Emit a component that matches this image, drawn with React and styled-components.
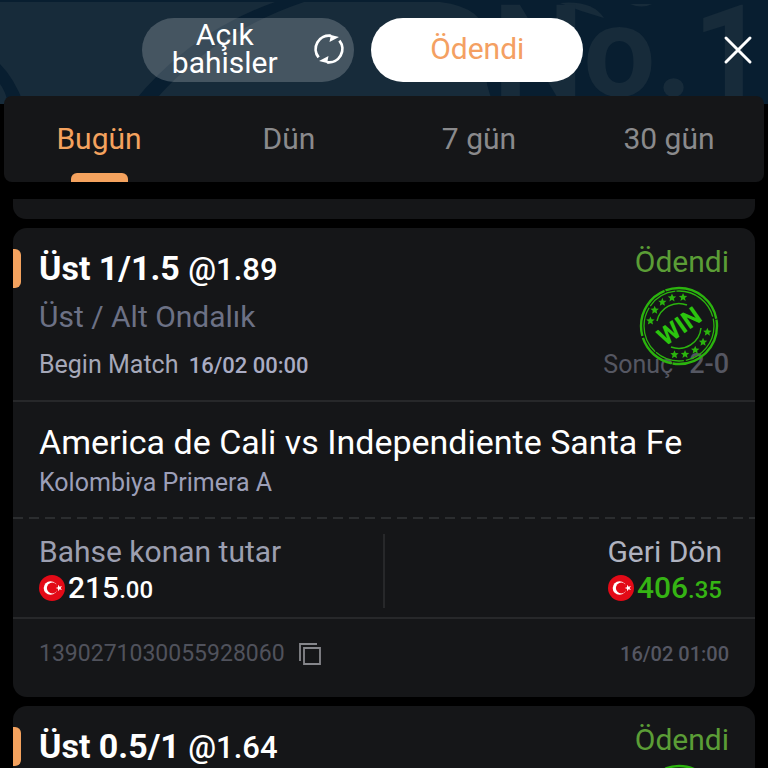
import React from "react";
import styled, { createGlobalStyle } from "styled-components";

const Global = createGlobalStyle`
  * { box-sizing: border-box; }
  html, body, #root { height: 100%; }
  body { margin: 0; background: #000; overflow: hidden; font-family: Roboto, sans-serif; }
  button { font: inherit; border: 0; padding: 0; background: none; color: inherit; cursor: pointer; }
  h2, h3, p, dl, dt, dd { margin: 0; font-weight: 400; }
`;

const Page = styled.div`
  height: 100%;
  display: flex;
  flex-direction: column;
  overflow: hidden;
`;

const Header = styled.header`
  position: relative;
  flex: none;
  height: 96px;
  padding: 4px 14px 0 0;
  display: grid;
  grid-template-columns: 5fr auto 6fr;
  align-items: center;
  background: #081e30;
`;

const Backdrop = styled.svg`
  position: absolute;
  top: 0;
  left: 0;
  width: 100%;
  height: 104px;
`;

const Switcher = styled.div`
  position: relative;
  grid-column: 2;
  display: flex;
  gap: 17px;
`;

const Pill = styled.button`
  width: 212px;
  height: 64px;
  border-radius: 32px;
  display: flex;
  align-items: center;
  justify-content: center;
  gap: 35px;
  padding: 0 0 2px ${(p) => (p.$active ? 0 : 20)}px;
  background: ${(p) => (p.$active ? "#fff" : "rgba(255, 255, 255, 0.2)")};
  color: ${(p) => (p.$active ? "#f4a062" : "#fff")};
  font-size: 30px;
  line-height: 28px;
`;

const CloseButton = styled.button`
  position: relative;
  justify-self: end;
  width: 32px;
  height: 32px;
  svg { display: block; }
`;

const Tabs = styled.nav`
  position: relative;
  flex: none;
  height: 86px;
  margin: 0 4px 17px;
  display: grid;
  grid-template-columns: repeat(4, 1fr);
  background: #151618;
  border-radius: 8px;
`;

const Tab = styled.button`
  display: flex;
  flex-direction: column;
  align-items: center;
  justify-content: space-between;
  padding-top: 25px;
  font-size: 30px;
  line-height: 36px;
  color: ${(p) => (p.$active ? "#f4a25e" : "#8a8a8c")};
  &::after {
    content: "";
    width: 57px;
    height: 9px;
    border-radius: 6px 6px 0 0;
    background: ${(p) => (p.$active ? "#f4a25e" : "transparent")};
  }
`;

const List = styled.main`
  flex: 1;
  min-height: 0;
  overflow: hidden;
  padding: 0 13px;
  display: flex;
  flex-direction: column;
  gap: 9px;
`;

const PreviousCard = styled.div`
  flex: none;
  height: 20px;
  border-radius: 0 0 13px 13px;
  background: #151618;
`;

const Card = styled.article`
  flex: none;
  border-radius: 14px;
  background: #151618;
`;

const Selection = styled.section`
  display: flex;
  justify-content: space-between;
  position: relative;
  padding: 20px 26px 17px;
  border-bottom: ${(p) => (p.$line ? "2px solid #27282a" : "0")};
  &::before {
    content: "";
    position: absolute;
    left: 0;
    top: 21px;
    width: 8px;
    height: 39px;
    border-radius: 0 6px 6px 0;
    background: #f4a25e;
  }
`;

const Fixture = styled.section`
  padding: 20px 26px 16px;
`;

const Pick = styled.h2`
  font-size: 34px;
  line-height: 40px;
  font-weight: 700;
  color: #fff;
`;

const Odds = styled.span`
  font-size: 31px;
  line-height: 1;
  font-weight: 500;
`;

const Market = styled.p`
  margin-top: 9px;
  font-size: 30px;
  line-height: 40px;
  color: #6c7185;
`;

const Begin = styled.p`
  margin-top: 10px;
  font-size: 25px;
  line-height: 36px;
  color: #a5a8b8;
`;

const Time = styled.time`
  margin-left: 4px;
  font-size: ${(p) => (p.$dim ? 20 : 22)}px;
  line-height: 1;
  font-weight: 500;
  color: ${(p) => (p.$dim ? "#555763" : "#a9acc4")};
`;

const Outcome = styled.div`
  position: relative;
  display: flex;
  flex-direction: column;
  justify-content: space-between;
  text-align: right;
`;

const Status = styled.p`
  font-size: 30px;
  line-height: 28px;
  color: #5b9d36;
`;

const Result = styled.p`
  display: flex;
  align-items: baseline;
  gap: 16px;
  justify-content: flex-end;
  font-size: 25px;
  line-height: 36px;
  color: #555762;
  strong { font-size: 27px; font-weight: 500; line-height: 34px; }
`;

const Stamp = styled.svg`
  position: absolute;
  right: 10px;
  top: 38px;
  width: 80px;
  height: 80px;
`;

const StampWord = styled.text`
  font: 700 25px Roboto, sans-serif;
  text-anchor: middle;
  fill: #2bc40e;
`;

const BackdropWord = styled.text`
  font: 700 128px Roboto, sans-serif;
  fill: #172b3a;
`;

const MatchName = styled.h3`
  font-size: 34px;
  line-height: 40px;
  color: #fff;
`;

const League = styled.p`
  margin-top: 3px;
  font-size: 25px;
  line-height: 36px;
  color: #9c9fb8;
`;

const DashedRule = styled.div`
  height: 2px;
  background: repeating-linear-gradient(90deg, #2b2d2f 0 10px, transparent 10px 16px);
`;

const Money = styled.dl`
  display: flex;
  justify-content: space-between;
  align-items: center;
  padding: 15px 26px 9px;
  border-bottom: 2px solid #27282a;
`;

const Divider = styled.div`
  width: 2px;
  height: 74px;
  background: #27282a;
`;

const MoneyItem = styled.div`
  flex: 1 1 0;
  display: flex;
  flex-direction: column;
  align-items: ${(p) => (p.$end ? "flex-end" : "flex-start")};
  padding-right: 7px;
  dt { font-size: 30px; line-height: 34px; color: ${(p) => (p.$end ? "#b0b3c0" : "#9c9fb0")}; }
  dd {
    display: flex;
    align-items: center;
    gap: 3px;
    font-size: 30px;
    line-height: 38px;
    font-weight: 500;
    color: ${(p) => (p.$end ? "#35b414" : "#fff")};
  }
  small { font-size: 24px; line-height: 1; }
`;

const Footer = styled.footer`
  display: flex;
  justify-content: space-between;
  align-items: center;
  padding: 16px 26px 24px;
`;

const Ticket = styled.div`
  display: flex;
  align-items: center;
  gap: 13px;
  font-size: 23px;
  line-height: 38px;
  color: #50525c;
  svg { display: block; }
`;

function RefreshIcon() {
  return (
    <svg width="32" height="32" viewBox="0 0 32 32" fill="none" aria-hidden="true">
      <path d="M5.600 24.400A13.300 13.300 0 0 1 18 2.900M26.400 7.600A13.300 13.300 0 0 1 14 29.100" stroke="#fff" strokeWidth="2.800" />
      <path d="M16 1.400L26 4l-9.500 5 1-5zM16 30.600L6 28l9.500-5-1 5z" fill="#fff" />
    </svg>
  );
}

function Flag() {
  return (
    <svg width="26" height="26" viewBox="0 0 26 26" aria-hidden="true">
      <circle cx="13" cy="13" r="13" fill="#e30a17" />
      <circle cx="11.500" cy="13" r="6.800" fill="#fff" />
      <circle cx="13.300" cy="13" r="5.400" fill="#e30a17" />
      <path d="M16.600 13l2.400-.8.100-2.500 1.500 2 2.400-.7-1.400 2 1.400 2-2.400-.7-1.500 2-.1-2.500z" fill="#fff" />
    </svg>
  );
}

const STAR = "M0-4.400 1.200-1.600 4.200-1.400 1.900.6 2.600 3.600 0 2-2.600 3.600-1.900.6-4.200-1.400-1.200-1.600z";
const STAR_ANGLES = [-170, -147, -125, -104, -82, 12, 34, 56, 78, 99];

function WinStamp() {
  return (
    <Stamp viewBox="-40 -40 80 80" fill="none" role="img" aria-label="WIN">
      <g stroke="#2bb40e">
        <circle r="38" strokeWidth="2.400" strokeDasharray="66 1 40 2 55 1" />
        <circle r="35" strokeWidth="1.300" strokeDasharray="48 2 30 1" />
        <path d="M-22-5A22.500 22.500 0 0 1 8-21M22 2A22.500 22.500 0 0 1-8 21" strokeWidth="1.500" />
      </g>
      {STAR_ANGLES.map((a) => {
        const r = (a * Math.PI) / 180;
        return <path key={a} d={STAR} fill="#2bb40e" transform={`translate(${29 * Math.cos(r)} ${29 * Math.sin(r)})`} />;
      })}
      <StampWord transform="rotate(-35)" y="9">WIN</StampWord>
    </Stamp>
  );
}

function Selected({ pick, odds, begin, result }) {
  return (
    <Selection $line={Boolean(result)}>
      <div>
        <Pick>{pick} <Odds>@{odds}</Odds></Pick>
        {begin && <Market>Üst / Alt Ondalık</Market>}
        {begin && <Begin>Begin Match <Time>{begin}</Time></Begin>}
      </div>
      <Outcome>
        <Status>Ödendi</Status>
        {result && <Result><span>Sonuç</span><strong>{result}</strong></Result>}
        <WinStamp />
      </Outcome>
    </Selection>
  );
}

function Amount({ label, value: [whole, cents], end }) {
  return (
    <MoneyItem $end={end}>
      <dt>{label}</dt>
      <dd><Flag /><span>{whole}<small>.{cents}</small></span></dd>
    </MoneyItem>
  );
}

function Bet(bet) {
  return (
    <Card>
      <Selected {...bet} />
      {bet.match && (
        <>
          <Fixture>
            <MatchName>{bet.match}</MatchName>
            <League>{bet.league}</League>
          </Fixture>
          <DashedRule />
          <Money>
            <Amount label="Bahse konan tutar" value={bet.stake} />
            <Divider />
            <Amount label="Geri Dön" value={bet.payout} end />
          </Money>
          <Footer>
            <Ticket>
              <span>{bet.id}</span>
              <button aria-label="Kopyala">
                <svg width="24" height="24" viewBox="0 0 24 24" fill="none" stroke="#85868b" strokeWidth="1.800" aria-hidden="true">
                  <path d="M2 19V2h17M6 6h16v16H6z" />
                </svg>
              </button>
            </Ticket>
            <Time $dim>{bet.settled}</Time>
          </Footer>
        </>
      )}
    </Card>
  );
}

const BETS = [
  {
    pick: "Üst 1/1.5", odds: "1.89", result: "2-0",
    match: "America de Cali vs Independiente Santa Fe", league: "Kolombiya Primera A",
    stake: ["215", "00"], payout: ["406", "35"],
    id: "1390271030055928060", begin: "16/02 00:00", settled: "16/02 01:00",
  },
  { pick: "Üst 0.5/1", odds: "1.64" },
];

export default function App() {
  return (
    <Page>
      <Global />
      <Header>
        <Backdrop viewBox="0 0 768 104" preserveAspectRatio="xMidYMin slice" aria-hidden="true">
          <path d="M0 0H768V104H0z" fill="#081e30" />
          <path d="M0 2H275Q190 32 132 104H24Q14 78 0 64z" fill="#172b3a" />
          <path d="M0 84Q6 92 8 104H0z" fill="#172b3a" />
          <path d="M304 2H440Q490 8 486 45T494 104H152Q210 34 304 2z" fill="#172b3a" />
          <path d="M560 3Q592 0 604 18Q582 12 560 3zM630 4h22q-10 5-22 0z" fill="#172b3a" />
          <BackdropWord x="493" y="96">No.1</BackdropWord>
        </Backdrop>
        <Switcher>
          <Pill><span>Açık<br />bahisler</span><RefreshIcon /></Pill>
          <Pill $active>Ödendi</Pill>
        </Switcher>
        <CloseButton aria-label="Kapat">
          <svg width="32" height="32" viewBox="0 0 32 32" stroke="#fff" strokeWidth="3" strokeLinecap="round">
            <path d="M4 4l24 24M28 4L4 28" />
          </svg>
        </CloseButton>
      </Header>
      <Tabs>
        <Tab $active>Bugün</Tab>
        <Tab>Dün</Tab>
        <Tab>7 gün</Tab>
        <Tab>30 gün</Tab>
      </Tabs>
      <List>
        <PreviousCard />
        {BETS.map((bet) => <Bet key={bet.pick} {...bet} />)}
      </List>
    </Page>
  );
}
